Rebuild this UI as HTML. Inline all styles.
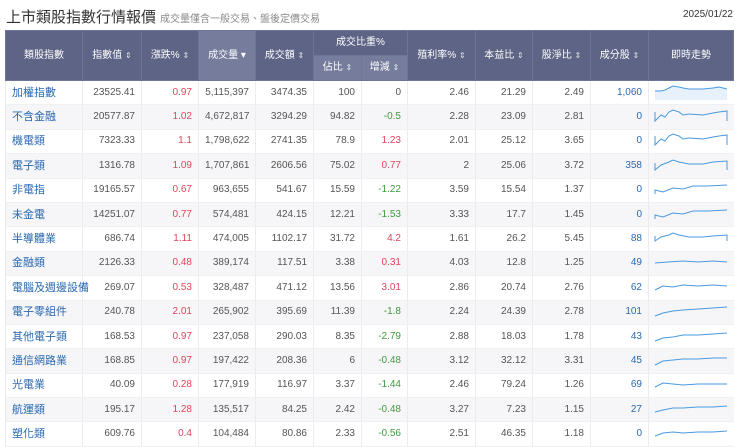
<!DOCTYPE html>
<html><head><meta charset="utf-8"><style>
body{margin:0;width:740px;height:447px;overflow:hidden;background:#fff;font-family:"Liberation Sans","Noto Sans CJK TC",sans-serif;}
.title{position:absolute;left:6px;top:6px;font-size:15px;color:#333;}
.title small{font-size:10px;color:#888;margin-left:4px;}
.date{position:absolute;right:7px;top:9px;font-size:10px;color:#333;}
table{position:absolute;left:5px;top:30px;border-collapse:collapse;table-layout:fixed;width:728px;font-size:10px;}
th{background:#5d6485;color:#fff;font-weight:normal;border:1px solid #6e7596;height:24px;padding:0;line-height:12px;}
th.s{background:#757c9c;}
th.sub{background:#767d9c;}
tr.d{height:24.4px;}
td{height:23.4px;padding:0 6px;text-align:right;color:#555;border-left:1px solid #ececf0;border-bottom:1px solid #f0f0f3;white-space:nowrap;line-height:12px;box-sizing:border-box;}
tr:nth-child(even) td{background:#f6f6f8;}
td:first-child{text-align:left;color:#2a69b0;font-size:11px;}
.r{color:#e0455a}.g{color:#3d9c3d}.b{color:#2a69b0}
td.sp{padding:0 4px;}
td svg{display:block;}
.ar{font-size:8px;opacity:.8}
</style></head><body>
<div class="title">上市類股指數行情報價<small>成交量僅含一般交易、盤後定價交易</small></div>
<div class="date">2025/01/22</div>
<table>
<colgroup><col style="width:77px"><col style="width:59px"><col style="width:57px"><col style="width:57px"><col style="width:58px"><col style="width:48px"><col style="width:46px"><col style="width:68px"><col style="width:57px"><col style="width:58px"><col style="width:58px"><col style="width:85px"></colgroup>
<tr><th rowspan="2">類股指數</th><th rowspan="2">指數值 <span class="ar">⇕</span></th><th rowspan="2">漲跌% <span class="ar">⇕</span></th><th rowspan="2" class="s">成交量 ▾</th><th rowspan="2">成交額 <span class="ar">⇕</span></th><th colspan="2">成交比重%</th><th rowspan="2">殖利率% <span class="ar">⇕</span></th><th rowspan="2">本益比 <span class="ar">⇕</span></th><th rowspan="2">股淨比 <span class="ar">⇕</span></th><th rowspan="2">成分股 <span class="ar">⇕</span></th><th rowspan="2">即時走勢</th></tr>
<tr><th class="sub">佔比 <span class="ar">⇕</span></th><th class="sub">增減 <span class="ar">⇕</span></th></tr>
<tr class="d"><td>加權指數</td><td>23525.41</td><td class="r">0.97</td><td>5,115,397</td><td>3474.35</td><td>100</td><td>0</td><td>2.46</td><td>21.29</td><td>2.49</td><td class="b">1,060</td><td class="sp"><svg width="76" height="18"><path d="M2 7 L8 7 L12 6 L16 4 L20 2 L26 3 L30 4 L36 5 L50 5 L60 4 L66 3 L74 5 L74 16 L2 16Z" fill="#e6f1fb"/><path d="M2 7 L8 7 L12 6 L16 4 L20 2 L26 3 L30 4 L36 5 L50 5 L60 4 L66 3 L74 5" fill="none" stroke="#4a9ae0"/></svg></td></tr>
<tr class="d"><td>不含金融</td><td>20577.87</td><td class="r">1.02</td><td>4,672,817</td><td>3294.29</td><td>94.82</td><td class="g">-0.5</td><td>2.28</td><td>23.09</td><td>2.81</td><td class="b">0</td><td class="sp"><svg width="76" height="18"><path d="M2 4 L2 13 L8 7 L12 9 L16 4 L20 2 L26 4 L30 7 L36 6 L50 7 L60 5 L66 4 L74 3 L74 13" fill="none" stroke="#4a9ae0"/></svg></td></tr>
<tr class="d"><td>機電類</td><td>7323.33</td><td class="r">1.1</td><td>1,798,622</td><td>2741.35</td><td>78.9</td><td class="r">1.23</td><td>2.01</td><td>25.12</td><td>3.65</td><td class="b">0</td><td class="sp"><svg width="76" height="18"><path d="M2 4 L2 13 L8 7 L12 9 L16 4 L20 2 L26 4 L30 7 L36 6 L50 7 L60 5 L66 4 L74 3 L74 13" fill="none" stroke="#4a9ae0"/></svg></td></tr>
<tr class="d"><td>電子類</td><td>1316.78</td><td class="r">1.09</td><td>1,707,861</td><td>2606.56</td><td>75.02</td><td class="r">0.77</td><td>2</td><td>25.06</td><td>3.72</td><td class="b">358</td><td class="sp"><svg width="76" height="18"><path d="M2 6 L2 13 L8 8 L16 5 L20 3 L26 5 L36 7 L50 7 L60 5 L74 4 L74 13" fill="none" stroke="#4a9ae0"/></svg></td></tr>
<tr class="d"><td>非電指</td><td>19165.57</td><td class="r">0.67</td><td>963,655</td><td>541.67</td><td>15.59</td><td class="g">-1.22</td><td>3.59</td><td>15.54</td><td>1.37</td><td class="b">0</td><td class="sp"><svg width="76" height="18"><path d="M2 13 L2 9 L10 11 L20 7 L30 8 L40 5 L55 5 L74 4" fill="none" stroke="#4a9ae0"/></svg></td></tr>
<tr class="d"><td>未金電</td><td>14251.07</td><td class="r">0.77</td><td>574,481</td><td>424.15</td><td>12.21</td><td class="g">-1.53</td><td>3.33</td><td>17.7</td><td>1.45</td><td class="b">0</td><td class="sp"><svg width="76" height="18"><path d="M2 13 L2 9 L10 11 L20 7 L30 8 L40 5 L55 5 L74 4" fill="none" stroke="#4a9ae0"/></svg></td></tr>
<tr class="d"><td>半導體業</td><td>686.74</td><td class="r">1.11</td><td>474,005</td><td>1102.17</td><td>31.72</td><td class="r">4.2</td><td>1.61</td><td>26.2</td><td>5.45</td><td class="b">88</td><td class="sp"><svg width="76" height="18"><path d="M2 6 L2 11 L8 7 L16 5 L20 3 L26 5 L36 7 L50 7 L60 6 L74 5 L74 11" fill="none" stroke="#4a9ae0"/></svg></td></tr>
<tr class="d"><td>金融類</td><td>2126.33</td><td class="r">0.48</td><td>389,174</td><td>117.51</td><td>3.38</td><td class="r">0.31</td><td>4.03</td><td>12.8</td><td>1.25</td><td class="b">49</td><td class="sp"><svg width="76" height="18"><path d="M2 9 L15 8 L30 7 L45 8 L60 7 L74 8" fill="none" stroke="#4a9ae0"/></svg></td></tr>
<tr class="d"><td>電腦及週邊設備</td><td>269.07</td><td class="r">0.53</td><td>328,487</td><td>471.12</td><td>13.56</td><td class="r">3.01</td><td>2.86</td><td>20.74</td><td>2.76</td><td class="b">62</td><td class="sp"><svg width="76" height="18"><path d="M2 11 L10 7 L20 8 L30 6 L45 7 L60 6 L74 7" fill="none" stroke="#4a9ae0"/></svg></td></tr>
<tr class="d"><td>電子零組件</td><td>240.78</td><td class="r">2.01</td><td>265,902</td><td>395.69</td><td>11.39</td><td class="g">-1.8</td><td>2.24</td><td>24.39</td><td>2.78</td><td class="b">101</td><td class="sp"><svg width="76" height="18"><path d="M2 13 L10 10 L20 8 L30 7 L45 6 L60 5 L74 4" fill="none" stroke="#4a9ae0"/></svg></td></tr>
<tr class="d"><td>其他電子類</td><td>168.53</td><td class="r">0.97</td><td>237,058</td><td>290.03</td><td>8.35</td><td class="g">-2.79</td><td>2.88</td><td>18.03</td><td>1.78</td><td class="b">43</td><td class="sp"><svg width="76" height="18"><path d="M2 13 L10 10 L20 9 L30 7 L45 7 L60 6 L74 5" fill="none" stroke="#4a9ae0"/></svg></td></tr>
<tr class="d"><td>通信網路業</td><td>168.85</td><td class="r">0.97</td><td>197,422</td><td>208.36</td><td>6</td><td class="g">-0.48</td><td>3.12</td><td>32.12</td><td>3.31</td><td class="b">45</td><td class="sp"><svg width="76" height="18"><path d="M2 13 L10 9 L20 8 L30 7 L45 7 L60 6 L74 6" fill="none" stroke="#4a9ae0"/></svg></td></tr>
<tr class="d"><td>光電業</td><td>40.09</td><td class="r">0.28</td><td>177,919</td><td>116.97</td><td>3.37</td><td class="g">-1.44</td><td>2.46</td><td>79.24</td><td>1.26</td><td class="b">69</td><td class="sp"><svg width="76" height="18"><path d="M2 11 L10 7 L20 8 L30 9 L45 8 L60 8 L74 8" fill="none" stroke="#4a9ae0"/></svg></td></tr>
<tr class="d"><td>航運類</td><td>195.17</td><td class="r">1.28</td><td>135,517</td><td>84.25</td><td>2.42</td><td class="g">-0.48</td><td>3.27</td><td>7.23</td><td>1.15</td><td class="b">27</td><td class="sp"><svg width="76" height="18"><path d="M2 11 L10 9 L20 7 L30 7 L45 6 L60 6 L74 5" fill="none" stroke="#4a9ae0"/></svg></td></tr>
<tr class="d"><td>塑化類</td><td>609.76</td><td class="r">0.4</td><td>104,484</td><td>80.86</td><td>2.33</td><td class="g">-0.56</td><td>2.51</td><td>46.35</td><td>1.18</td><td class="b">0</td><td class="sp"><svg width="76" height="18"><path d="M2 11 L10 8 L20 7 L30 8 L45 7 L60 7 L74 6" fill="none" stroke="#4a9ae0"/></svg></td></tr>
</table>
</body></html>
